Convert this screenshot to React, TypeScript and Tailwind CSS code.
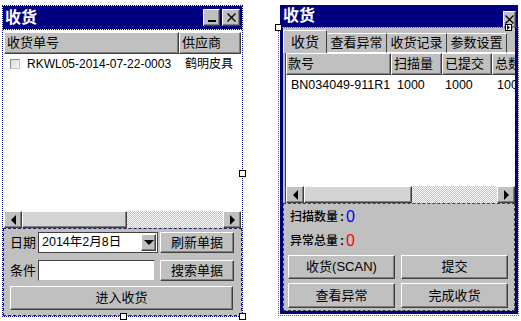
const raised =
  'border border-t-white border-l-white border-r-[#404040] border-b-[#404040] shadow-[inset_-1px_-1px_0_#808080]';
const sunken =
  'border border-t-[#404040] border-l-[#404040] border-r-[#c0c0c0] border-b-[#c0c0c0]';

function Arrow({ dir }: { dir: 'left' | 'right' | 'down' }) {
  const points = dir === 'left' ? '5,0 5,10 0,5' : dir === 'right' ? '0,0 0,10 5,5' : '0,0 10,0 5,5';
  const w = dir === 'down' ? 10 : 5;
  const h = dir === 'down' ? 5 : 10;
  return (
    <svg width={w} height={h} viewBox={`0 0 ${w} ${h}`}>
      <polygon points={points} fill="#000" />
    </svg>
  );
}

function HScroll({ thumbClass }: { thumbClass: string }) {
  return (
    <div className="flex h-[17px] shrink-0 bg-[#c0c0c0]">
      <div className={`${raised} flex w-[18px] items-center justify-center bg-[#c0c0c0]`}>
        <Arrow dir="left" />
      </div>
      <div className={`${raised} ${thumbClass} bg-[#d4d4d4]`} />
      <div className="flex-1 bg-[repeating-conic-gradient(#c0c0c0_0_25%,#ffffff_0_50%)] bg-[length:2px_2px]" />
      <div className={`${raised} flex w-[18px] items-center justify-center bg-[#c0c0c0]`}>
        <Arrow dir="right" />
      </div>
    </div>
  );
}

function XGlyph() {
  return (
    <svg width="9" height="9" viewBox="0 0 9 9">
      <path d="M0.5 0.5 L8.5 8.5 M8.5 0.5 L0.5 8.5" stroke="#000" strokeWidth="1.3" />
    </svg>
  );
}

function Handle({ className }: { className: string }) {
  return <div className={`absolute h-[7px] w-[7px] border border-black bg-white ${className}`} />;
}

function Button({ children, className }: { children: React.ReactNode; className: string }) {
  return (
    <div className={`${raised} flex items-center justify-center bg-[#c0c0c0] text-[13px] text-black ${className}`}>
      {children}
    </div>
  );
}

function LeftWindow() {
  return (
    <div className="relative ml-[2px] flex h-[312px] w-[241px] flex-col border border-dotted border-[#000080] bg-white">
      {/* title bar */}
      <div className="flex h-[23px] shrink-0 items-center justify-between bg-[#000080] pl-[2px] pr-[2px]">
        <span className="text-[16px] font-bold leading-none text-white">收货</span>
        <div className="flex gap-[2px]">
          <div className={`${raised} flex h-[17px] w-[17px] items-end justify-center bg-[#c0c0c0] pb-[3px]`}>
            <div className="h-[2px] w-[8px] bg-black" />
          </div>
          <div className={`${raised} flex h-[17px] w-[18px] items-center justify-center bg-[#c0c0c0]`}>
            <XGlyph />
          </div>
        </div>
      </div>
      <div className="h-[3px] border-t border-dotted border-[#000080]" />

      {/* list */}
      <div className="flex flex-1 flex-col px-[1px]">
        <div className="flex h-[22px] shrink-0 text-[13px]">
          <div className={`${raised} flex w-[175px] items-center bg-[#c0c0c0] pl-[2px]`}>收货单号</div>
          <div className={`${raised} flex flex-1 items-center bg-[#c0c0c0] pl-[2px]`}>供应商</div>
        </div>
        <div className="flex-1">
          <div className="flex h-[20px] items-center whitespace-nowrap">
            <div className="ml-[6px] h-[10px] w-[10px] shrink-0 border border-t-[#8a8a8a] border-l-[#8a8a8a] border-r-[#c8c8c8] border-b-[#c8c8c8] bg-[linear-gradient(135deg,#d8d8d8,#f8f8f8)]" />
            <span className="ml-[7px] w-[158px] shrink-0 text-[12px]">RKWL05-2014-07-22-0003</span>
            <span className="text-[12px]">鹤明皮具</span>
          </div>
        </div>
        <HScroll thumbClass="w-[105px]" />
      </div>

      {/* bottom panel */}
      <div className="flex h-[88px] shrink-0 flex-col border border-dashed border-[#202060] bg-[#c0c0c0] px-[4px] pt-[3px] text-[13px]">
        <div className="flex h-[21px] items-center">
          <span className="w-[30px] pl-[2px]">日期</span>
          <div className="flex h-[21px] w-[120px] items-center border border-[#404040] bg-white pl-[3px] pr-[1px]">
            <span className="flex-1 text-[12.5px]">2014年2月8日</span>
            <div className={`${raised} flex h-[17px] w-[15px] items-center justify-center bg-[#c0c0c0]`}>
              <Arrow dir="down" />
            </div>
          </div>
          <Button className="ml-[2px] h-[21px] w-[74px]">刷新单据</Button>
        </div>
        <div className="mt-[7px] flex h-[21px] items-center">
          <span className="w-[30px] pl-[2px]">条件</span>
          <div className={`${sunken} h-[21px] w-[117px] bg-white`} />
          <Button className="ml-[5px] h-[21px] w-[74px]">搜索单据</Button>
        </div>
        <Button className="mt-[5px] ml-[2px] h-[24px] w-[223px]">进入收货</Button>
      </div>

      <Handle className="left-[117px] top-[307px]" />
      <Handle className="left-[236px] top-[307px]" />
      <Handle className="left-[236px] top-[164px]" />
    </div>
  );
}

function RightWindow() {
  return (
    <div className="relative ml-[37px] flex h-[309px] w-[238px] flex-col">
      {/* title bar */}
      <div className="flex h-[22px] shrink-0 items-center justify-between bg-[#000080] pl-[3px] pr-[2px]">
        <span className="text-[16px] font-bold leading-none text-white">收货</span>
        <div className={`${raised} mt-[6px] flex h-[17px] w-[13px] items-center justify-center bg-[#c0c0c0]`}>
          <XGlyph />
        </div>
      </div>

      {/* body */}
      <div className="flex flex-1 flex-col border-x-[3px] border-b-[3px] border-[#000080] bg-[#c0c0c0] text-[13px]">
        {/* tabs */}
        <div className="flex h-[26px] shrink-0 items-end pt-[3px]">
          <div className="flex h-[23px] w-[44px] items-center justify-center border-l border-t border-r border-l-white border-t-white border-r-[#404040] bg-[#c0c0c0] text-[14px]">
            收货
          </div>
          <div className="flex h-[20px] w-[60px] items-center justify-center border-t border-r border-t-white border-r-[#404040] border-b border-b-white">
            查看异常
          </div>
          <div className="flex h-[20px] w-[60px] items-center justify-center border-t border-r border-t-white border-r-[#404040] border-b border-b-white">
            收货记录
          </div>
          <div className="flex h-[20px] w-[60px] items-center justify-center border-t border-r border-t-white border-r-[#404040] border-b border-b-white">
            参数设置
          </div>
          <div className="h-[20px] flex-1 border-b border-b-white" />
        </div>

        {/* grid */}
        <div className="ml-[2px] flex h-[150px] shrink-0 flex-col overflow-hidden border-l border-[#404040] bg-white">
          <div className="flex h-[22px] shrink-0">
            <div className={`${raised} flex w-[105px] shrink-0 items-center bg-[#c0c0c0] pl-[1px]`}>款号</div>
            <div className={`${raised} flex w-[51px] shrink-0 items-center bg-[#c0c0c0] pl-[2px]`}>扫描量</div>
            <div className={`${raised} flex w-[50px] shrink-0 items-center bg-[#c0c0c0] pl-[2px]`}>已提交</div>
            <div className={`${raised} flex w-[50px] shrink-0 items-center bg-[#c0c0c0] pl-[2px]`}>总数</div>
          </div>
          <div className="flex-1">
            <div className="flex h-[20px] items-center whitespace-nowrap text-[12.5px]">
              <span className="w-[111px] shrink-0 pl-[5px]">BN034049-911R1</span>
              <span className="w-[48px] shrink-0">1000</span>
              <span className="w-[52px] shrink-0">1000</span>
              <span className="shrink-0">1000</span>
            </div>
          </div>
          <HScroll thumbClass="w-[108px]" />
        </div>

        {/* bottom panel */}
        <div className="flex flex-1 flex-col border border-dashed border-[#404040] px-[4px] pt-[2px]">
          <div className="flex h-[22px] items-center pl-[2px] text-[12px] font-medium">
            <span>扫描数量</span>
            <span className="mx-[2px] font-bold">:</span>
            <span className="text-[16px] font-normal text-[#0000ff]">0</span>
          </div>
          <div className="mt-[2px] flex h-[22px] items-center pl-[2px] text-[12px] font-medium">
            <span>异常总量</span>
            <span className="mx-[2px] font-bold">:</span>
            <span className="text-[16px] font-normal text-[#ff0000]">0</span>
          </div>
          <div className="mt-[3px] flex gap-[6px]">
            <Button className="h-[24px] w-[107px]">收货(SCAN)</Button>
            <Button className="h-[24px] w-[107px]">提交</Button>
          </div>
          <div className="mt-[4px] flex gap-[6px]">
            <Button className="h-[25px] w-[107px]">查看异常</Button>
            <Button className="h-[25px] w-[107px]">完成收货</Button>
          </div>
        </div>
      </div>

      {/* designer selection outline */}
      <div className="pointer-events-none absolute left-[-2px] top-[22px] h-[289px] w-[241px] border border-dotted border-[#606060]" />
      <Handle className="left-[-5px] top-[19px]" />
      <div className="absolute left-[225px] top-[19px] flex h-[7px] w-[7px] items-center justify-center border border-black bg-white">
        <svg width="3" height="5" viewBox="0 0 3 5">
          <polygon points="0,0 3,2.5 0,5" fill="#000" />
        </svg>
      </div>
    </div>
  );
}

export default function App() {
  return (
    <div className="flex h-[321px] w-[521px] items-start bg-white pt-[5px] font-['Liberation_Sans','Noto_Sans_CJK_SC',sans-serif] text-black">
      <LeftWindow />
      <RightWindow />
    </div>
  );
}
